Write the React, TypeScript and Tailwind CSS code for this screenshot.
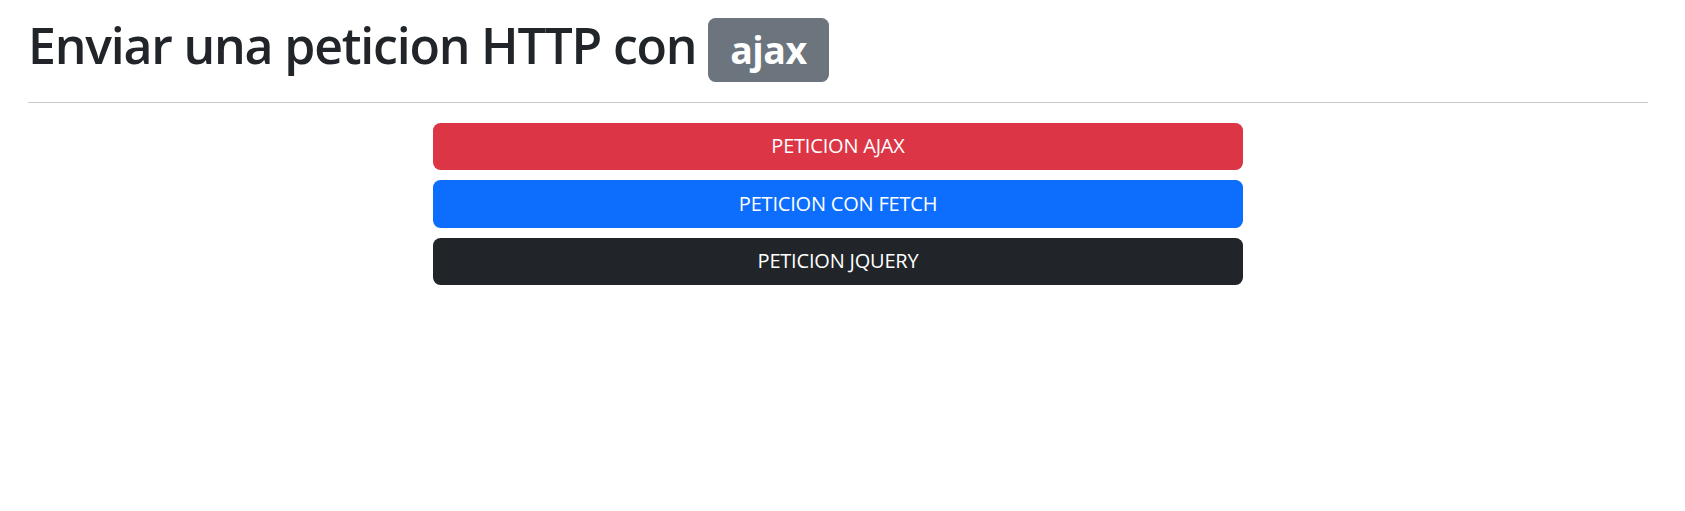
import React from 'react';

const buttons = [
  { label: 'PETICION AJAX', color: 'bg-[#dc3545]' },
  { label: 'PETICION CON FETCH', color: 'bg-[#0d6efd]' },
  { label: 'PETICION JQUERY', color: 'bg-[#212529]' },
];

export default function App() {
  return (
    <div
      className="min-h-screen bg-white pl-[28px] pr-[37px] pt-[15px] text-[#212529]"
      style={{ fontFamily: '"Open Sans", "Noto Sans", sans-serif' }}
    >
      {/* Title */}
      <h1 className="text-[50px] font-semibold leading-[1.2] tracking-[-1.2px]">
        Enviar una peticion HTTP con{' '}
        <span className="inline-block rounded-[7.5px] bg-[#6c757d] px-[22px] py-[13px] align-baseline text-[37.5px] font-bold leading-none tracking-[-0.5px] text-white">
          ajax
        </span>
      </h1>

      <hr className="my-[20px] border-t border-[#c8c9ca]" />

      {/* Request buttons */}
      <div className="mx-auto flex w-1/2 flex-col gap-[10px]">
        {buttons.map((btn) => (
          <button
            key={btn.label}
            className={`h-[47.5px] w-full rounded-[7.5px] text-[20px] tracking-[-0.2px] text-white ${btn.color}`}
          >
            {btn.label}
          </button>
        ))}
      </div>
    </div>
  );
}
